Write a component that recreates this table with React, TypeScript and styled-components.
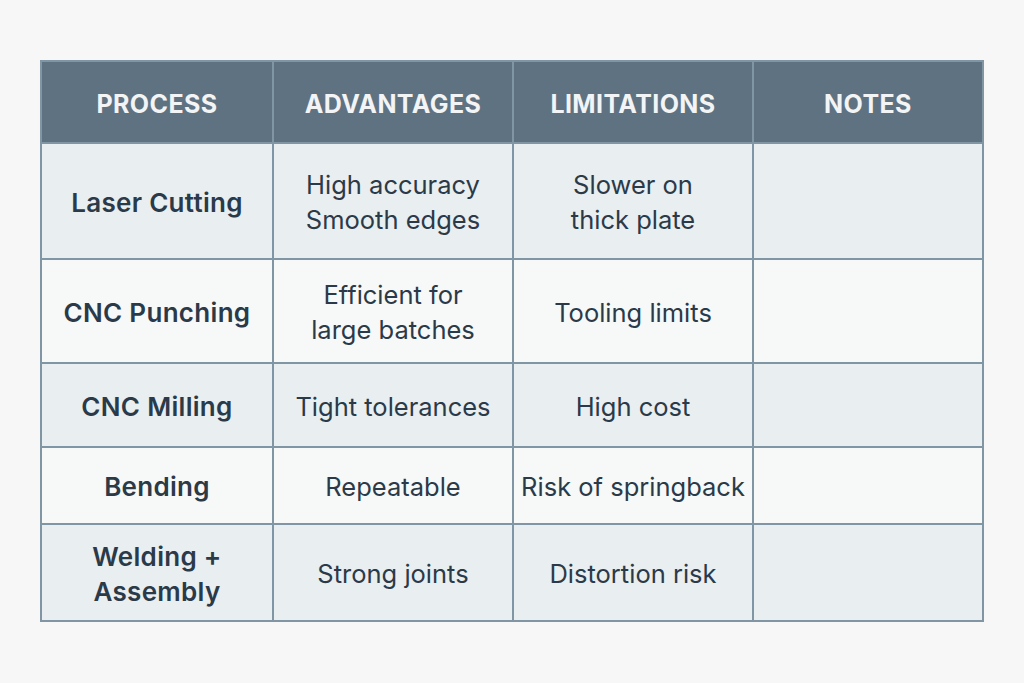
import * as React from 'react';
import styled, { createGlobalStyle } from 'styled-components';

const GlobalStyle = createGlobalStyle`
  html, body {
    margin: 0;
    padding: 0;
    background: #f7f7f7;
    font-family: Inter, "Open Sans", Roboto, sans-serif;
  }
`;

interface Row {
  process: string[];
  advantages: string[];
  limitations: string[];
  height: number;
}

const rows: Row[] = [
  { process: ['Laser Cutting'], advantages: ['High accuracy', 'Smooth edges'], limitations: ['Slower on', 'thick plate'], height: 116 },
  { process: ['CNC Punching'], advantages: ['Efficient for', 'large batches'], limitations: ['Tooling limits'], height: 104 },
  { process: ['CNC Milling'], advantages: ['Tight tolerances'], limitations: ['High cost'], height: 84 },
  { process: ['Bending'], advantages: ['Repeatable'], limitations: ['Risk of springback'], height: 77 },
  { process: ['Welding +', 'Assembly'], advantages: ['Strong joints'], limitations: ['Distortion risk'], height: 97 },
];

const Page = styled.div`
  width: 1024px;
  height: 683px;
  padding: 60px 0 0 40px;
  box-sizing: border-box;
`;

const Table = styled.div`
  width: 944px;
  display: grid;
  grid-template-columns: 230px 240px 240px 1fr;
  border: 2px solid #8096a4;
  box-sizing: border-box;
`;

const HeadCell = styled.div`
  height: 80px;
  padding-top: 3px;
  box-sizing: border-box;
  background: #5e7282;
  color: #f2f4f6;
  font-size: 25px;
  font-weight: 700;
  letter-spacing: 0.4px;
  display: flex;
  align-items: center;
  justify-content: center;
  border-left: 2px solid #8196a5;
  &:first-child {
    border-left: none;
  }
`;

const Cell = styled.div<{ $h: number; $alt: boolean; $first?: boolean }>`
  height: ${(p) => p.$h}px;
  box-sizing: border-box;
  padding-top: 2px;
  background: ${(p) => (p.$alt ? '#e9eef0' : '#f7f8f8')};
  color: #2b3a48;
  font-size: ${(p) => (p.$first ? 26 : 25.5)}px;
  font-weight: ${(p) => (p.$first ? 600 : 400)};
  letter-spacing: ${(p) => (p.$first ? 0.3 : 0)}px;
  line-height: 35px;
  text-align: center;
  display: flex;
  flex-direction: column;
  align-items: center;
  justify-content: center;
  border-top: 2px solid #8096a4;
  border-left: ${(p) => (p.$first ? 'none' : '2px solid #8096a4')};
`;

const Lines = ({ lines }: { lines: string[] }) => (
  <>
    {lines.map((l) => (
      <span key={l}>{l}</span>
    ))}
  </>
);

export default function App() {
  return (
    <Page>
      <GlobalStyle />
      <Table>
        <HeadCell>PROCESS</HeadCell>
        <HeadCell>ADVANTAGES</HeadCell>
        <HeadCell>LIMITATIONS</HeadCell>
        <HeadCell>NOTES</HeadCell>
        {rows.map((r, i) => (
          <React.Fragment key={r.process.join(' ')}>
            <Cell $h={r.height} $alt={i % 2 === 0} $first>
              <Lines lines={r.process} />
            </Cell>
            <Cell $h={r.height} $alt={i % 2 === 0}>
              <Lines lines={r.advantages} />
            </Cell>
            <Cell $h={r.height} $alt={i % 2 === 0}>
              <Lines lines={r.limitations} />
            </Cell>
            <Cell $h={r.height} $alt={i % 2 === 0} />
          </React.Fragment>
        ))}
      </Table>
    </Page>
  );
}
